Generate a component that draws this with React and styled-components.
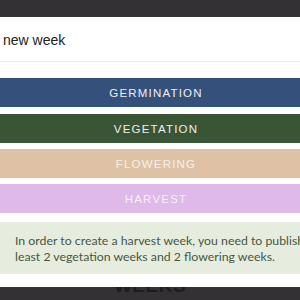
import React from 'react';
import styled, { createGlobalStyle } from 'styled-components';

const GlobalStyle = createGlobalStyle`
  html, body {
    margin: 0;
    padding: 0;
    background: #333133;
    overflow: hidden;
  }
`;

const Page = styled.div`
  width: 300px;
  height: 300px;
  background: #333133;
  display: flex;
  flex-direction: column;
  overflow: hidden;
  position: relative;
`;

const TopBar = styled.div`
  height: 17px;
  flex-shrink: 0;
`;

const Modal = styled.section`
  background: #ffffff;
  width: 312px;
  height: 270px;
  flex-shrink: 0;
  display: flex;
  flex-direction: column;
  position: relative;
  z-index: 2;
`;

const Header = styled.header`
  height: 45px;
  border-bottom: 1px solid #efefea;
  display: flex;
  align-items: center;
  padding: 1px 0 0 3px;
  box-sizing: border-box;
  font-family: "Liberation Sans", Arial, sans-serif;
  font-size: 14px;
  color: #222222;
`;

const Options = styled.div`
  display: flex;
  flex-direction: column;
  gap: 6px;
  padding-top: 16px;
`;

const Phase = styled.button`
  height: 29px;
  border: none;
  background: ${props => props.bg};
  color: ${props => props.fg || '#eceef0'};
  font-family: "Liberation Sans", Arial, sans-serif;
  font-size: 11.5px;
  letter-spacing: 1.2px;
  text-transform: uppercase;
  display: flex;
  align-items: center;
  justify-content: center;
  padding: 0;
  margin-top: ${props => props.extra || 0}px;
`;

const Notice = styled.p`
  margin: 9px 0 0;
  height: 52px;
  box-sizing: border-box;
  background: #e6eddf;
  padding: 11px 0 0 15px;
  font-family: Lato, "Noto Sans", sans-serif;
  font-size: 12.3px;
  line-height: 16px;
  color: #475742;
  white-space: nowrap;
`;

const Backdrop = styled.h2`
  margin: 0;
  position: absolute;
  left: 0;
  right: 0;
  top: 276px;
  text-align: center;
  font-family: "Liberation Sans", Arial, sans-serif;
  font-weight: bold;
  font-size: 19px;
  line-height: 19px;
  letter-spacing: 0.5px;
  color: #1e1d1e;
  z-index: 1;
`;

const phases = [
  { name: 'Germination', bg: '#34517c' },
  { name: 'Vegetation', bg: '#3a5535', extra: 1 },
  { name: 'Flowering', bg: '#dfc2a6', fg: '#f6efe8' },
  { name: 'Harvest', bg: '#dfbae8', fg: '#f6eef8' },
];

const App = () => (
  <Page>
    <GlobalStyle />
    <TopBar />
    <Modal>
      <Header>new week</Header>
      <Options>
        {phases.map(p => (
          <Phase key={p.name} bg={p.bg} fg={p.fg} extra={p.extra}>
            {p.name}
          </Phase>
        ))}
      </Options>
      <Notice>
        In order to create a harvest week, you need to publish at
        <br />
        least 2 vegetation weeks and 2 flowering weeks.
      </Notice>
    </Modal>
    <Backdrop>WEEKS</Backdrop>
  </Page>
);

export default App;
